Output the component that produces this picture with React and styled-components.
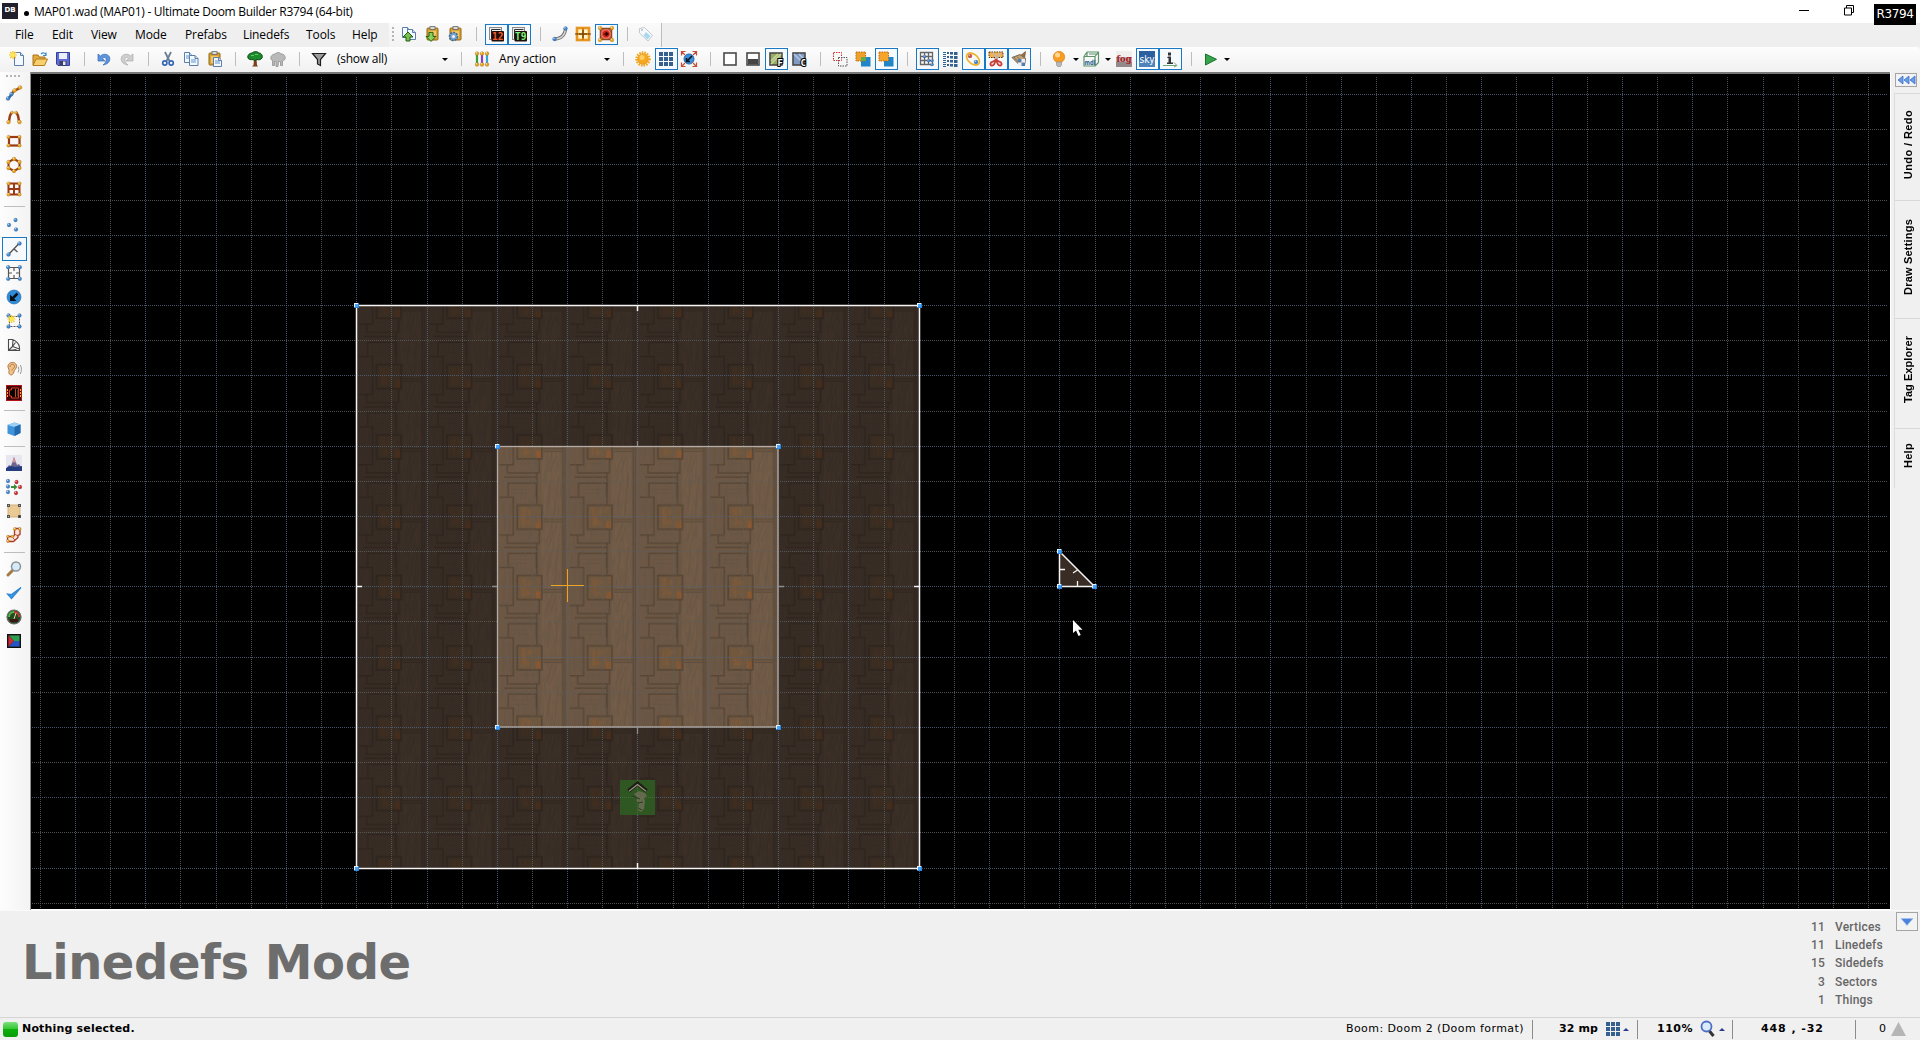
import React from "react";
import styled, { createGlobalStyle } from "styled-components";

const Global = createGlobalStyle`
  html, body { margin: 0; padding: 0; width: 1920px; height: 1040px; overflow: hidden; background: #f0f0f0; }
  * { box-sizing: border-box; }
`;

const UI = `"Open Sans", "Noto Sans", sans-serif`;

const Window = styled.div`
  display: grid;
  grid-template-rows: 23px 24px 25px 838px 107px 23px;
  width: 1920px;
  height: 1040px;
  background: #f0f0f0;
  font-family: ${UI};
  font-size: 12px;
  color: #000;
  position: relative;
`;

const TitleBar = styled.header`
  display: flex;
  align-items: center;
  background: #fff;
  padding-left: 2px;
`;
const Logo = styled.div`
  width: 16px;
  height: 16px;
  margin-bottom: 2px;
  background: #20202c;
  color: #fff;
  font: bold 7px/15px "DejaVu Sans", sans-serif;
  text-align: center;
`;
const Bullet = styled.span`
  width: 5px;
  height: 5px;
  border-radius: 50%;
  background: #000;
  margin: 3px 5px 0 6px;
`;
const Label = styled.span`
  font-size: ${(p) => p.$size || 12}px;
  letter-spacing: ${(p) => p.$ls || 0}px;
  line-height: 16px;
  white-space: pre;
`;
const WindowButtons = styled.div`
  display: flex;
  align-items: center;
  gap: 35px;
  margin-left: auto;
  padding: 0 66px 3px 0;
`;
const Revision = styled.div`
  position: absolute;
  top: 4px;
  left: 1874px;
  width: 42px;
  height: 21px;
  background: #000;
  color: #fff;
  font: 12px/21px "DejaVu Sans", sans-serif;
  letter-spacing: -0.4px;
  text-align: center;
`;

const MenuBar = styled.nav`
  display: flex;
  background: #efefef;
  padding-left: 15px;
`;
const MenuItem = styled.span`
  width: ${(p) => p.$w}px;
  letter-spacing: -0.1px;
  line-height: 23px;
  flex: none;
`;
const Strip = styled.div`
  display: flex;
  align-items: center;
  padding: 0 3px 2px 0;
  background: linear-gradient(#fafafa, #f3f3f3);
  border-right: 1px solid #bdbdbd;
`;
const Grip = styled.i`
  width: 2px;
  height: 14px;
  margin: 0 4px 0 3px;
  background: repeating-linear-gradient(#b4b4b4 0 2px, transparent 2px 4px);
`;
const ToolBar = styled.div`
  display: flex;
  align-items: center;
  padding: 0 0 1px 6px;
  background: linear-gradient(#fdfdfd, #f1f1f1);
  border-radius: 0 4px 0 0;
`;
const Tool = styled.button`
  display: flex;
  align-items: center;
  justify-content: center;
  flex: none;
  width: 23px;
  height: ${(p) => (p.$row ? 21 : 22)}px;
  padding: 0 1px 0 0;
  background: ${(p) => (p.$on ? "#f7fafd" : "transparent")};
  border: 1px solid ${(p) => (p.$on ? "#1a79c4" : "transparent")};
`;
const Sep = styled.i`
  flex: none;
  width: ${(p) => p.$w || 18}px;
  height: 14px;
  background: linear-gradient(#bdbdbd, #bdbdbd) 9px 0 / 1px 14px no-repeat;
`;
const Combo = styled.div`
  display: flex;
  align-items: center;
  justify-content: space-between;
  width: ${(p) => p.$w}px;
  height: 22px;
  padding: 0 4px 0 ${(p) => p.$pad}px;
`;
const Arrow = styled.i`
  flex: none;
  border: 3px solid transparent;
  border-${(p) => (p.$up ? "bottom" : "top")}-color: ${(p) => (p.$up ? "#2c3a8c" : "#000")};
  border-${(p) => (p.$up ? "top" : "bottom")}: 0;
  margin: ${(p) => p.$m || "0"};
`;

const Main = styled.main`
  display: grid;
  grid-template-columns: 31px 1859px 30px;
`;
const SideBar = styled.aside`
  display: flex;
  flex-direction: column;
  padding: 3px 0 0 2px;
  background: linear-gradient(90deg, #fdfdfd, #f3f3f3);
  border-right: 1px solid #8f8f8f;
`;
const SideGrip = styled.i`
  height: 2px;
  width: 14px;
  margin: 0 0 4px 4px;
  background: repeating-linear-gradient(90deg, #b4b4b4 0 2px, transparent 2px 4px);
`;
const SideTool = styled(Tool)`
  width: 25px;
  height: 24px;
`;
const SideSep = styled.i`
  height: ${(p) => p.$h || 12}px;
  margin: 0 5px 0 2px;
  background: linear-gradient(#bdbdbd, #bdbdbd) 0 5px / 100% 1px no-repeat;
`;
const Viewport = styled.section`
  background: #000;
  border-top: 2px solid #777;
  border-bottom: 1px solid #fff;
  svg { display: block; }
`;
const Docker = styled.aside`
  display: flex;
  flex-direction: column;
  align-items: flex-end;
  border-left: 1px solid #fff;
  background: #f0f0f0;
`;
const Collapse = styled.button`
  display: flex;
  align-items: center;
  justify-content: center;
  width: 22px;
  height: ${(p) => p.$h}px;
  padding: 0;
  margin: ${(p) => p.$m};
  background: #f3f3f3;
  border: 1px solid #a5a5a5;
`;
const Tab = styled.div`
  display: flex;
  align-items: center;
  justify-content: center;
  width: 26px;
  height: ${(p) => p.$h}px;
  padding-bottom: ${(p) => p.$p}px;
  border-top: 1px solid #d9d9d9;
  border-left: 1px solid #dcdcdc;
  font: bold 11px/14px "Liberation Sans", sans-serif;
  letter-spacing: ${(p) => p.$ls}px;
  span { writing-mode: vertical-rl; transform: rotate(180deg); white-space: nowrap; }
`;

const InfoPanel = styled.section`
  display: flex;
  justify-content: space-between;
  border-top: 1px solid #fafafa;
  background: #f0f0f0;
`;
const ModeName = styled.h1`
  margin: 23px 0 0 22px;
  font: bold 48px/56px "DejaVu Sans", sans-serif;
  letter-spacing: ${(p) => p.$ls}px;
  color: #6d6d6d;
`;
const InfoRight = styled.div`
  display: flex;
  gap: 11px;
`;
const Stats = styled.div`
  display: grid;
  grid-template-columns: 40px 50px;
  grid-auto-rows: 18.2px;
  column-gap: 10px;
  padding-top: 7px;
  font: 500 12px/18px "Roboto", sans-serif;
  color: #666;
  letter-spacing: 0.2px;
  span:nth-child(odd) { text-align: right; }
`;
const StatusBar = styled.footer`
  display: flex;
  align-items: center;
  border-top: 1px solid #d4d4d4;
  background: #f0f0f0;
  font: 11px/20px "DejaVu Sans", sans-serif;
`;
const Light = styled.i`
  width: 15px;
  height: 15px;
  margin: 0 4px 0 3px;
  border-radius: 3px;
  background: linear-gradient(#7be07b, #35c735 45%, #0caf0c 50%, #0a9c0a);
`;
const Strong = styled.b`
  font-size: 11px;
  letter-spacing: ${(p) => p.$ls || 0}px;
  white-space: pre;
`;
const Cell = styled.div`
  display: flex;
  align-items: center;
  width: ${(p) => p.$w}px;
  height: 19px;
  padding-left: ${(p) => p.$pad || 0}px;
  border-left: ${(p) => (p.$first ? "0" : "1px solid #8c8c8c")};
  margin-left: ${(p) => (p.$first ? "auto" : 0)};
  letter-spacing: ${(p) => p.$ls || 0}px;
  white-space: pre;
`;
const Glyph = styled.svg`
  flex: none;
  margin-left: ${(p) => p.$ml}px;
`;
const IconSvg = styled.svg`
  flex: none;
  overflow: visible;
`;

/* ---------- icons ---------- */

const Ball = ({ x, y, r = 2, c = "#e9a21b" }) => (
  <g>
    <circle cx={x} cy={y} r={r} fill={c} stroke="#00000040" strokeWidth=".5" />
    <circle cx={x - r * 0.3} cy={y - r * 0.4} r={r * 0.4} fill="#ffffffb0" />
  </g>
);
const Corners = ({ c, a = 2, b = 14, r = 2 }) => (
  <>{[[a, a], [b, a], [a, b], [b, b]].map(([x, y]) => <Ball key={`${x}-${y}`} x={x} y={y} r={r} c={c} />)}</>
);
const B = "#3f86cf";
const O = "#eda51f";
const Nine = ({ c = "#355f8f" }) => (
  <g fill={c}>{[0, 1, 2].flatMap((i) => [0, 1, 2].map((j) => <rect key={`${i}${j}`} x={1 + i * 5} y={1 + j * 5} width="4" height="4" />))}</g>
);
const Page = ({ x = 3, y = 1, w = 9, h = 12 }) => (
  <g>
    <path d={`M${x} ${y}h${w - 3}l3 3v${h - 3}h-${w}z`} fill="#f4f9ff" stroke="#5c7ea8" />
    <path d={`M${x + w - 3} ${y}v3h3`} fill="#c9dcf0" stroke="#5c7ea8" />
  </g>
);
const Clip = () => (
  <g>
    <rect x="3" y="2" width="11" height="12" rx="1" fill="#dda431" stroke="#8f6414" />
    <rect x="6" y=".6" width="5" height="3" fill="#d8d8d8" stroke="#666" strokeWidth=".8" />
    <rect x="5" y="5" width="7" height="7" fill="#efc766" />
  </g>
);
const MiniText = (p) => <text fontFamily="DejaVu Sans Mono" fontWeight="bold" fontSize="9" paintOrder="stroke" stroke="#000" strokeWidth="2" {...p} />;
const Frame = ({ children, fill = "#fff" }) => (
  <g>
    <rect x="2" y="2" width="12" height="12" fill={fill} stroke="#4a4a4a" strokeWidth="1.6" />
    {children}
  </g>
);
const Badge = ({ color, children }) => (
  <>
    <rect x="1.500" y="1.500" width="12" height="12" fill="#eee" stroke="#8a8a8a" />
    <path d="M3.500 13v-9.500h9" fill="none" stroke="#333" />
    <rect x="3.500" y="5" width="12.500" height="10.500" rx="1" fill="#1c0f08" />
    <text x="4" y="14" fontFamily="DejaVu Sans Mono" fontWeight="bold" fontSize="10" fill={color} textLength="11.500" lengthAdjust="spacingAndGlyphs">{children}</text>
  </>
);

const ICONS = {
  exportCopy: <><Page x={1.5} y={1.5} w={8} h={10} /><Page x={6.5} y={3.5} w={8} h={10} /><path d="M7 6l5 5h-3v4h-4v-4h-3z" fill="#79c04c" stroke="#235f12" /></>,
  importPaste: <><Clip /><path d="M7 15.4l-5-5h3v-4h4v4h3z" fill="#8fd05a" stroke="#235f12" /></>,
  pasteCog: <><Clip /><circle cx="6.5" cy="10.5" r="4" fill="#79a7d4" stroke="#44688f" strokeDasharray="2 1" strokeWidth="1.6" /><circle cx="6.5" cy="10.5" r="1.5" fill="#eef5fb" /></>,
  tag12: <Badge color="#f65a30">12</Badge>,
  tagT9: <Badge color="#7af57c">T9</Badge>,
  curve: <><path d="M2 13c7 0 11-4 11.500-10" fill="none" stroke="#777" strokeWidth="3.2" /><path d="M2 13c7 0 11-4 11.500-10" fill="none" stroke="#d4d4d4" strokeWidth="1.4" /><Ball x={2.500} y={13} c={B} /><Ball x={13.500} y={2.500} c={B} /></>,
  joined: <><rect x="2" y="2" width="12" height="12" fill="#fff3c8" stroke="#e6951e" strokeWidth="2.6" /><path d="M8 2v12M2 8h12" stroke="#d17d10" strokeWidth="2" /><path d="M8 4v8M4 8h8M0 8h3M13 8h3" stroke="#5a3c10" strokeWidth="1" /></>,
  snapRed: <><rect x="2.500" y="2.500" width="11" height="11" fill="#e05a4a" stroke="#8a4a1c" strokeWidth="1.500" /><circle cx="8" cy="8" r="4.200" fill="#d3241c" stroke="#ffc0aa" strokeWidth=".6" /><path d="M5.500 8h3M8 6l2.500 2-2.500 2z" stroke="#300" fill="#300" /><Corners c={O} a={2} b={14} r={1.900} /></>,
  tag: <><path d="M1.500 2.500l5-1 8 8-4.500 5.500-8.500-8z" fill="#f6fafc" stroke="#c0c9ce" /><path d="M8 6l4.500 4-3 3.500-4-4z" fill="#a8d8ee" /><circle cx="4" cy="4" r="1" fill="#b4c0c6" /></>,
  newFile: <><Page x={5.500} y={1.500} w={9} h={13} /><path d="M4 0v8M0 4h8M1 1l6 6M7 1l-6 6" stroke="#f5c51b" strokeWidth="1.2" /><circle cx="4" cy="4" r="2" fill="#ffe95c" /></>,
  open: <><path d="M1 14v-10h5l1 2h6v3" fill="#e5a93c" stroke="#a9741a" /><path d="M1 14.500l3-6.500h11.500l-3 6.500z" fill="#f7cf6d" stroke="#b27d1d" /><path d="M9 3c2-2 4-1 5 1m0-2.500v3h-3" fill="none" stroke="#3f8bc8" strokeWidth="1.2" /></>,
  save: <><path d="M1.500 1.500h13v13h-11.500l-1.500-1.500z" fill="#5f6bd3" stroke="#343f9c" /><rect x="4" y="2" width="8" height="6" fill="#e9effb" /><rect x="4.500" y="10" width="7" height="4.500" fill="#3d3f63" /><rect x="8" y="10.500" width="2.500" height="3.500" fill="#e7e7ee" /></>,
  undo: <path d="M2 3v7h7l-2.500-2.500c2-2 4.500-.5 3.500 2.500-.5 1.800-1.500 3-3 4 4-.500 7-3 6.800-6.500-.2-4.200-6-5.800-9.300-2.500z" fill="#5f94dc" stroke="#3368b5" strokeWidth=".7" />,
  redo: <path d="M14 3v7h-7l2.500-2.500c-2-2-4.500-.5-3.500 2.500.5 1.800 1.500 3 3 4-4-.500-7-3-6.800-6.500.2-4.200 6-5.800 9.300-2.500z" fill="#cfcfcf" stroke="#a9a9a9" strokeWidth=".7" />,
  cut: <><path d="M5 1l4.500 9M11 1l-4.500 9" stroke="#6d7f95" strokeWidth="1.8" /><circle cx="4.800" cy="12" r="2.100" fill="none" stroke="#3567b4" strokeWidth="1.700" /><circle cx="11.200" cy="12" r="2.100" fill="none" stroke="#3567b4" strokeWidth="1.700" /></>,
  copy: <><Page x={1.500} y={1.500} w={8} h={10} /><Page x={6.500} y={4.500} w={8.500} h={10} /><path d="M3 5h4M3 7h3M8 9h5M8 11h5" stroke="#5c93cf" /></>,
  paste: <><Clip /><Page x={7.500} y={6.500} w={8} h={9} /><path d="M9 10h5M9 12h5" stroke="#5c93cf" /></>,
  tree: <><path d="M7 8h2.500l.5 6 1 1.500h-6l1.500-1.500z" fill="#7a421a" /><path d="M1 7c-1-3 2-5 4-5 2-2 6-1.500 7 0 2.500 0 4 3 3 5-1 2-4 2-5 1.500-2 1.500-3 1-4 0-2 .5-4.500 0-5-1.500z" fill="#1d8a2c" stroke="#0a4a14" /><path d="M4 4.500h3M8 3.500h3" stroke="#5fc868" /></>,
  trees: <path d="M1 8c-1-3 2-5 4-5 2-2 5-2 6 0 3-.5 5 3 4 5-.5 1.500-2 1.500-2.500 1.500v5h-2v-4h-2l-.5 5h-2v-5h-1.500v4h-2v-5c-.500 0-1-.500-1.500-1.500z" fill="#b9b9b9" stroke="#909090" strokeWidth=".8" />,
  funnel: <path d="M1.500 2.500h13l-5 6v6l-3-1.500v-4.500z" fill="#9b9b9b" stroke="#1e1e1e" strokeWidth="1.2" />,
  actions: <><path d="M3 3v11" stroke="#3aa03a" strokeWidth="2.200" /><path d="M8 3v11" stroke="#8c3fc0" strokeWidth="2.200" /><path d="M13 3v11" stroke="#34a5d6" strokeWidth="2.200" />{[3, 8, 13].map((x) => <g key={x}><Ball x={x} y={2.500} r={1.900} /><Ball x={x} y={13.500} r={1.900} /></g>)}</>,
  sun: <><circle cx="8" cy="8" r="6.500" fill="none" stroke="#f0a81e" strokeWidth="2.400" strokeDasharray="1.600 1" /><circle cx="8" cy="8" r="5.300" fill="#f6a821" stroke="#dd8a0f" strokeWidth=".6" /><circle cx="7" cy="6.500" r="2.500" fill="#ffcf63" /></>,
  grid: <Nine />,
  expand: <><path d="M0.500 4.500v-4h4M11.500 .5h4v4M.5 11.500v4h4M15.500 11.500v4h-4M1 1l3 3M15 1l-3 3M1 15l3-3M15 15l-3-3" fill="none" stroke="#c84b35" strokeWidth="1.200" /><circle cx="8" cy="8" r="5" fill="#3a8fd6" stroke="#2a6dac" /><path d="M11 5l-4.500 4.500M5.500 7v3.500h3.500" stroke="#07131f" strokeWidth="1.600" fill="none" /></>,
  box: <Frame />,
  half: <Frame><rect x="3" y="8" width="10" height="5.500" fill="#444" /></Frame>,
  floor: <Frame fill="#94ad62"><path d="M3 10l7-7M3 13l10-10" stroke="#c7d69f" strokeWidth="1.500" /><MiniText x="9.500" y="15" fill="#fff">F</MiniText></Frame>,
  ceil: <Frame fill="#809cc4"><path d="M3 3l7 7M8 3l5 5" stroke="#b3c6e2" strokeWidth="1.500" /><MiniText x="9.500" y="15" fill="#fff">C</MiniText></Frame>,
  mergeA: <><rect x="1.500" y="1.500" width="8" height="8" fill="none" stroke="#d0342c" strokeDasharray="1.500 1" /><rect x="6.500" y="6.500" width="8.500" height="8.500" fill="none" stroke="#55565a" strokeDasharray="1.500 1" /></>,
  mergeB: <><rect x="6" y="6" width="9.500" height="9.500" fill="#1f86c9" /><rect x="1" y="1" width="9.500" height="9" fill="#f0a02a" stroke="#bc6a17" strokeDasharray="1.500 1" /><rect x="6" y="6" width="4.500" height="4" fill="#5fae4e" /></>,
  mergeC: <><rect x="6" y="6" width="9.500" height="9.500" fill="#1f86c9" /><rect x="1" y="1" width="9.500" height="9" fill="#f5a52c" stroke="#bc6a17" strokeDasharray="1.500 1" /></>,
  gridSnap: <><path d="M1.500 1.500h12v12h-12zM5.500 1v13M9.500 1v13M1 5.500h13M1 9.500h13" fill="none" stroke="#676767" strokeWidth="1.300" /><Ball x={5.500} y={5.500} r={1.500} c={B} /><Ball x={9.500} y={9.500} r={1.500} c={B} /><Ball x={13} y={9.500} r={1.600} c={B} /><Ball x={13} y={13.500} r={1.600} c={B} /></>,
  gridDyn: <g fill="#34618f">{[0, 1, 2, 3].map((j) => <React.Fragment key={j}><rect x="12" y={1 + j * 4} width="3.500" height="3" /><rect x="8" y={1 + j * 4} width="3" height="2.500" /><rect x="5" y={1 + j * 4} width="2" height="2" /></React.Fragment>)}{[0, 1, 2, 3, 4, 5, 6, 7].map((j) => <rect key={j} x="1" y={1 + j * 2} width="3" height="1" />)}</g>,
  oval: <><ellipse cx="8" cy="8" rx="7.500" ry="4.700" transform="rotate(40 8 8)" fill="none" stroke="#efb52b" strokeWidth="1.700" /><Ball x={5} y={5} r={2} c="#d5473f" /><Ball x={11} y={11} r={2} c={B} /></>,
  scissors: <><rect x="1" y="1" width="14" height="5.500" fill="#f4b04b" stroke="#553a10" strokeDasharray="1.500 1" /><path d="M5 1l5 9M12 2l-5 8" stroke="#bbb" strokeWidth="1.500" /><path d="M8 9l-5 2.500c-2 3 1.500 4 3 2zM8 9l5 2.500c2 3-1.500 4-3 2z" fill="#f3dcd8" stroke="#c8423a" strokeWidth="1.800" /></>,
  brush: <><path d="M14.500 .5l-5.500 4.500 4.500 3z" fill="#9a6d3a" stroke="#6c4722" strokeWidth=".6" /><path d="M9 3.500l5.500 4-1 7h-4.500l-8-8z" fill="#bda27c" stroke="#77654c" /><path d="M3 6l6 7M6 5.500l5 5" stroke="#857050" /><path d="M7 8h3.500v3.500h-3.500zM10.500 11.500h3.500v3.500h-3.500z" fill="#4b7fb0" /><path d="M10.500 8h3.500v3.500h-3.500zM7 11.500h3.500v3.500h-3.500z" fill="#eef" /></>,
  bulb: <><circle cx="8" cy="6" r="5.700" fill="#f79d23" stroke="#d57a12" strokeWidth=".6" /><circle cx="6.500" cy="4" r="2.500" fill="#ffd690" /><path d="M5.500 11h5v3l-1 1.500h-3l-1-1.500z" fill="#b9b9b9" stroke="#888" strokeWidth=".6" /></>,
  mdl: <><path d="M1 5.500h11v9.500h-11zM4 1h11.500v10.500M4 1l-3 4.500M15.500 1l-3.500 4.500M15.500 11.500l-3.500 3.500M4 1v4M6 3h9" fill="none" stroke="#5f9468" strokeWidth="1.200" /><text x="1.500" y="13.500" fontFamily="DejaVu Sans" fontSize="7" fontWeight="bold" fill="#2b5c94" textLength="11" lengthAdjust="spacingAndGlyphs">mdl</text></>,
  fog: <><rect x="0" y="0" width="16" height="16" fill="#f1eeee" /><rect y="6" width="16" height="10" fill="#b9adaf" /><rect y="11" width="16" height="5" fill="#93888a" /><text x=".5" y="11" fontFamily="DejaVu Serif" fontSize="10" fontWeight="bold" fill="#a71820" textLength="15" lengthAdjust="spacingAndGlyphs">fog</text></>,
  sky: <><rect width="16" height="16" fill="#2b5f9f" /><rect y="9" width="16" height="7" fill="#4f83ba" /><text x=".5" y="11.500" fontFamily="DejaVu Sans" fontSize="10" fill="#fff" textLength="15" lengthAdjust="spacingAndGlyphs">sky</text></>,
  info: <><path d="M6 5.500h3v6h2v1.500h-6v-1.500h1.500v-4.500h-1.500z" fill="#333" /><rect x="6" y="1.500" width="3" height="3" fill="#333" /><path d="M1 14.500h13M12 11.500l3 3-3 1.500" fill="none" stroke="#6fa874" /></>,
  play: <path d="M2.500 3l11 5.300-11 5.700z" fill="#37a34a" stroke="#17732a" />,
  /* side bar */
  line: <><path d="M2 14l4-5" stroke="#2d6fb5" strokeWidth="2.600" /><path d="M6 9c1-4 4-3 8-6.500" stroke="#a8551a" strokeWidth="2.600" fill="none" /><Ball x={2} y={13.500} c={B} /><Ball x={5.500} y={9} c={B} /><Ball x={8.500} y={5.500} /><Ball x={14} y={2.500} /></>,
  arch: <><path d="M3 13c.500-5 1-9 3.500-9.500M13 13c-.500-5-1-9-3.500-9.500" fill="none" stroke="#9c3a14" strokeWidth="2.400" /><Ball x={2.500} y={13} /><Ball x={13.500} y={13} /><Ball x={6} y={3.500} r={1.600} /><Ball x={10} y={3.500} r={1.600} /></>,
  rect: <><rect x="3" y="4" width="10.500" height="8.500" fill="none" stroke="#9c3a14" strokeWidth="2.200" />{[[2.500, 4], [13.500, 4], [2.500, 12.500], [13.500, 12.500]].map(([x, y]) => <Ball key={x + y * 20} x={x} y={y} r={1.800} />)}</>,
  hex: <><path d="M8 2l5.500 3v6l-5.500 3-5.500-3v-6z" fill="none" stroke="#9c3a14" strokeWidth="2" />{[[8, 2], [13.500, 5], [13.500, 11], [8, 14], [2.500, 11], [2.500, 5]].map(([x, y]) => <Ball key={x + y * 20} x={x} y={y} r={1.900} />)}</>,
  lattice: <><path d="M2.500 2.500h11v11h-11zM8 2v12M2 8h12" fill="none" stroke="#9c3a14" strokeWidth="2" /><Corners c={O} a={2.500} b={13.500} r={1.800} /></>,
  vertices: <><Ball x={9.500} y={3} r={1.900} c={B} /><Ball x={3} y={8} r={1.900} c={B} /><Ball x={10} y={12.500} r={1.900} c={B} /></>,
  linedef: <><path d="M3 13l10.500-11M8 8l3.500 3" stroke="#555" strokeWidth="1.400" /><Ball x={2.500} y={13.500} c={B} /><Ball x={13.500} y={2.500} c={B} /></>,
  sector: <><path d="M2.500 2.500h11v11h-11zM8 3v3M8 10v3M3 8h3M10 8h3" fill="none" stroke="#555" strokeWidth="1.200" /><Corners c={B} a={2.200} b={13.800} r={1.900} /></>,
  things: <><circle cx="8" cy="8" r="7" fill="#2f8cd8" stroke="#2067a8" strokeWidth=".6" /><path d="M11.500 4.500l-5 5" stroke="#081018" strokeWidth="2.500" /><path d="M4 5.500v6.500h6.500z" fill="#081018" /></>,
  makeSector: <><path d="M3.500 3.500h10v10h-10z" fill="none" stroke="#555" strokeDasharray="2 1" /><Corners c={B} a={2.500} b={13.500} r={1.900} /><path d="M5.500 2v8M1.500 6h8M2.500 3l6 6M8.500 3l-6 6" stroke="#f2cb1f" strokeWidth="1.200" /><circle cx="5.500" cy="6" r="2.200" fill="#ffe652" /></>,
  wire: <path d="M2.500 13.500v-11h4c4 1.500 7 5 7 8v3zM2.500 13.500l4-4 .500-7M6.500 9.500l3-4M6.500 9.500l7 2.500M2.500 13.500l8-1" fill="none" stroke="#4a4a4a" strokeWidth="1.100" />,
  ear: <><path d="M2 6c-.500-6 9-6 8.500-.5-.2 2.500-2 3-2.700 5.500-.5 3-3.300 4-4.800 1.500-.5-1 .5-3-.2-4.200z" fill="#eec18e" stroke="#b67d42" /><path d="M4 6c0-3.500 4.500-3.500 4.500-.5 0 2-2.500 2-2.500 4" fill="none" stroke="#b67d42" /><path d="M12 5.500c1 2 1 4 0 6M14.300 4c1.500 2.500 1.500 6 0 9" fill="none" stroke="#9a9a9a" /></>,
  scene: <><rect x=".5" y=".5" width="15" height="15" fill="#3a0808" stroke="#b0141a" /><path d="M3.500 5h2v-2h7v10h-7v-2h-2z" fill="#070303" stroke="#e23a1c" /><path d="M9.500 4v8M12 5v6" stroke="#b9481c" /><path d="M1.500 4v8M14.500 4v8" stroke="#e6b52c" strokeDasharray="2 1" /></>,
  cube: <><path d="M1.500 4l7-2.500 6 2v8.500l-6 3-7-2.500z" fill="#3f93d8" /><path d="M1.500 4l7-2.500 6 2-6 2.500z" fill="#9dd0f3" /><path d="M8.500 6l6-2.500v8.500l-6 3z" fill="#2268ae" /></>,
  mountain: <><rect width="16" height="16" fill="#e8e6ee" /><path d="M0 14l3-4 2 1 3-9 3 8 2-1 3 5v2h-16z" fill="#6d6692" /><path d="M8 2l-2 6 2-1 2 1z" fill="#d79a9f" /><path d="M0 13l5-2 4 1 7-1v5h-16z" fill="#233d80" /></>,
  dots: <><Ball x={2} y={2} r={1.900} c={B} /><Ball x={2} y={7.500} r={1.900} c={B} /><Ball x={2} y={13} r={1.900} c={B} /><Ball x={10.500} y={3} r={1.900} c="#cf2b31" /><Ball x={14} y={8} r={1.900} c="#cf2b31" /><Ball x={10} y={14} r={1.900} c="#cf2b31" /><path d="M5 7h3v-2l3.500 3-3.500 3v-2h-3z" fill="#3e8c3a" /></>,
  block: <><rect x="2" y="2" width="12" height="12" fill="#e9c994" stroke="#d3b27c" /><g fill="#aaa" stroke="#555"><rect x="1.500" y="1.500" width="2" height="2" /><rect x="12.500" y="1.500" width="2" height="2" /><rect x="1.500" y="12.500" width="2" height="2" /><rect x="12.500" y="12.500" width="2" height="2" fill="#222" /></g></>,
  stairs: <><path d="M1.500 14.500v-5h5c2 0 2-1 2-3v-5h5.500v6l-2 1v2l-4.500 4z" fill="#f8e4da" stroke="#a83a22" strokeWidth="1.300" /><path d="M6 10l3 3M8.500 7l3.500 2" stroke="#a83a22" strokeWidth=".8" /><Ball x={6.500} y={9.500} r={1.400} /><Ball x={2} y={9.500} r={1.400} /><Ball x={2} y={14} r={1.500} /><Ball x={13.800} y={2} r={1.500} /><Ball x={8.800} y={2} r={1.500} /></>,
  magnifier: <><path d="M6.500 9.500l-4.500 4.500" stroke="#a37b44" strokeWidth="3" strokeLinecap="round" /><circle cx="10" cy="5.500" r="4.500" fill="#d6ebf7" stroke="#8c9299" strokeWidth="1.500" /></>,
  check: <path d="M1.500 9l4 4.500 9.500-11-9.500 7z" fill="#3f9ce4" stroke="#3188d2" strokeWidth="1.200" />,
  globe: <><circle cx="8" cy="8" r="7" fill="#234a23" stroke="#6a6a6a" strokeWidth="1.200" /><path d="M3 8a5 5 0 0 1 5-5" stroke="#4fbb4b" strokeWidth="2" fill="none" /><path d="M8 3a5 5 0 0 1 5 5" stroke="#c93b29" strokeWidth="2" fill="none" /><path d="M8 10l2-6" stroke="#e8d6a0" /><rect x="4" y="10" width="8" height="3" fill="#3b1712" /></>,
  colors: <><rect x="1.500" y="1.500" width="13" height="13" fill="#222" stroke="#111" /><path d="M2.500 2.500l5.500 5.500-5.500 5.500z" fill="#d22736" /><path d="M3 2.500h10.500v5.500h-5.500z" fill="#2aa04e" /><path d="M8 8h5.500v5.500h-10.500z" fill="#2457c5" /></>,
};
const Icon = ({ n }) => <IconSvg width="16" height="16" viewBox="0 0 16 16">{ICONS[n]}</IconSvg>;

const renderTools = (items, row) =>
  items.map((it, i) => {
    if (it === "|") return <Sep key={i} />;
    const on = it[0] === "*";
    return (
      <Tool key={i} $on={on} $row={row}>
        <Icon n={on ? it.slice(1) : it} />
      </Tool>
    );
  });
const renderSide = (items) =>
  items.map((it) => {
    const on = it[0] === "*";
    return (
      <SideTool key={it} $on={on}>
        <Icon n={on ? it.slice(1) : it} />
      </SideTool>
    );
  });

/* ---------- map ---------- */

const STEP = 35.16;
const GX = 356.7;
const GY = 305.54;
const range = (a, b) => Array.from({ length: b - a + 1 }, (_, i) => a + i);
const tone = (k) => (k % 2 ? "#5a5d5d" : "#50637a");

const Vertex = ({ x, y }) => (
  <g shapeRendering="crispEdges">
    <rect x={x - 2.500} y={y - 2.500} width="5" height="5" fill="#2b86dd" />
    <path d={`M${x - 2.500} ${y + 1.500}v-4h4v1h-3v3z`} fill="#e6f2fd" />
    <rect x={x - 1.500} y={y - 1.500} width="3" height="3" fill="#4ba3f5" />
  </g>
);

const TileLines = () => (
  <g fill="none" stroke="#4f3f30" strokeWidth="1.500" strokeOpacity=".75">
    <path d="M65.500 27v71M67.500 27v71" strokeWidth="1" />
    <path d="M2 51h14v38h-14" />
    <path d="M11 50v-13h28v14" />
    <path d="M7 31h32M39.500 27v31" />
    <path d="M10 89v8h32v-14" />
    <path d="M46 73h19M46 75.500h19" strokeWidth="1" />
    <rect x="20" y="59" width="24.500" height="24" fill="#71583f" strokeWidth="1.800" />
    <path d="M24 63l5-2v12l5 4-9 3z" fill="#9a5e2c" stroke="none" opacity=".3" />
    <path d="M31 63l6 2-7 5z" fill="#9a5e2c" stroke="none" opacity=".25" />
    <rect x="38.500" y="75" width="5" height="7" fill="#9d5826" stroke="none" opacity=".65" />
    <path d="M49 96l6-19M53 96l6-17M50 60l3-25M57 70l4-40" strokeWidth=".8" strokeOpacity=".35" />
    <path d="M14 43h20M14 47h18M13 55v30M22 88h14M7 56v28" strokeWidth=".8" strokeOpacity=".25" />
  </g>
);

const MapView = () => (
  <svg width="1859" height="835" viewBox="31 74 1859 835">
    <defs>
      <pattern id="floor" x="497.300" y="446.200" width="70.320" height="70.320" patternUnits="userSpaceOnUse">
        <rect width="71" height="71" fill="#6e5845" />
        <rect x="44" width="20" height="71" fill="#735c48" />
        <TileLines />
        <g transform="translate(0 -70.320)"><TileLines /></g>
      </pattern>
      <filter id="grain" x="0" y="0" width="1" height="1">
        <feTurbulence type="fractalNoise" baseFrequency="0.45 0.07" numOctaves="3" seed="4" />
        <feColorMatrix values="0 0 0 0 0.120  0 0 0 0 0.090  0 0 0 0 0.060  2.200 0 0 0 -0.850" />
      </filter>
    </defs>
    <rect x="356" y="305" width="563" height="563" fill="url(#floor)" />
    <rect x="356" y="305" width="563" height="563" filter="url(#grain)" opacity=".55" />
    <path d="M356 305h563v563h-563zM497 446v281h281v-281z" fill="#070508" fillOpacity=".52" fillRule="evenodd" />
    <path d="M1059.500 551.500v35h35z" fill="#382c25" />

    <g shapeRendering="crispEdges" strokeWidth="1" strokeDasharray="1 1">
      {range(-9, 43).map((k) => {
        const x = Math.floor(GX + STEP * k) + 0.5;
        return <path key={k} d={`M${x} 77V908`} stroke={tone(k)} strokeOpacity=".85" />;
      })}
      {range(-6, 17).map((k) => {
        const y = Math.floor(GY + STEP * k) + 0.5;
        return <path key={k} d={`M32 ${y}H1888`} stroke={tone(k)} strokeOpacity=".85" />;
      })}
    </g>

    <g shapeRendering="crispEdges">
      <rect x="620" y="780" width="35" height="35" fill="#2f5b22" fillOpacity=".92" />
      <path d="M637.500 780v35M620 797.500h35" stroke="#56745a" strokeOpacity=".6" strokeDasharray="1 1" />
    </g>
    <path d="M634 794l5-3 6 2 2 3-3 2 1 3-1 8-3 3-3-2 1-7-3-3 2-2z" fill="#77705c" fillOpacity=".75" />
    <path d="M632 796l8 3M638 803l5-1M638 808l4 2" stroke="#2c3a20" strokeWidth="1" />
    <path d="M628.500 791l9-7.500 9 7.500" fill="none" stroke="#1b1a13" strokeWidth="3.800" />
    <path d="M629 791.300l8.500-6.800 8.500 6.800" fill="none" stroke="#9a9280" strokeWidth="1.300" />

    <g fill="none" stroke="#b3aca6" strokeWidth="1.300">
      <rect x="497.500" y="446.500" width="280.500" height="280.500" />
      <path d="M637.500 441v5M637.500 728v6M492 586.500h5M779 586.500h5" stroke="#8f8a86" />
    </g>
    <g fill="none" stroke="#f6f4f4" strokeWidth="1.500">
      <rect x="356.500" y="305.500" width="563" height="563" />
      <path d="M637.500 306v5M637.500 863v5M357 586.500h5M914 586.500h5" />
      <path d="M1059.500 551.500v35h35z" />
      <path d="M1060 569.500h5M1077.500 586v-5M1077.500 570l-4.500 3" strokeWidth="1.300" />
    </g>
    {[[356.5, 305.5], [919.5, 305.5], [356.5, 868.5], [919.5, 868.5], [497.5, 446.5], [778.5, 446.5], [497.5, 727.5], [778.5, 727.5], [1059.5, 551.5], [1059.5, 586.5], [1094.5, 586.5]].map(([x, y]) => (
      <Vertex key={`${x},${y}`} x={x} y={y} />
    ))}
    <path d="M551 585.500h33M567.500 569v33" stroke="#f2a31c" shapeRendering="crispEdges" />
    <path d="M1073 620v13l3-2.500 2.500 5.500 2.200-1-2.400-5.300h4.200z" fill="#fff" />
  </svg>
);

const MENU = [["File", 37], ["Edit", 39], ["View", 44], ["Mode", 50], ["Prefabs", 58], ["Linedefs", 63], ["Tools", 46], ["Help", 37]];
const STATS = [[11, "Vertices"], [11, "Linedefs"], [15, "Sidedefs"], [3, "Sectors"], [1, "Things"]];

export default function App() {
  return (
    <>
      <Global />
      <Window>
        <TitleBar>
          <Logo>DB</Logo>
          <Bullet />
          <Label $ls={-0.28}>MAP01.wad (MAP01) - Ultimate Doom Builder R3794 (64-bit)</Label>
          <WindowButtons>
            <svg width="10" height="12"><path d="M0 6.500h10" stroke="#000" /></svg>
            <svg width="10" height="11"><path d="M.5 3h7v7h-7zM2.500 3v-2.500h7v7h-2" fill="none" stroke="#000" /></svg>
          </WindowButtons>
        </TitleBar>
        <MenuBar>
          {MENU.map(([t, w]) => <MenuItem key={t} $w={w}>{t}</MenuItem>)}
          <Strip>
            <Grip />
            {renderTools(["exportCopy", "importPaste", "pasteCog", "|", "*tag12", "*tagT9", "|", "curve", "joined", "*snapRed"], true)}
            <Sep $w={17} />
            {renderTools(["tag"], true)}
          </Strip>
        </MenuBar>
        <ToolBar>
          {renderTools(["newFile", "open", "save", "|", "undo", "redo", "|", "cut", "copy", "paste", "|", "tree", "trees", "|", "funnel"])}
          <Combo $w={121} $pad={6}><Label $ls={-0.25}>(show all)</Label><Arrow /></Combo>
          <Sep $w={19} />
          {renderTools(["actions"])}
          <Combo $w={120} $pad={5}><Label $ls={-0.15}>Any action</Label><Arrow /></Combo>
          {renderTools(["|", "sun", "*grid", "expand", "|", "box", "half", "*floor", "ceil", "|", "mergeA", "mergeB", "*mergeC", "|", "*gridSnap", "gridDyn", "*oval", "*scissors", "*brush"])}
          <Sep $w={17} />
          {renderTools(["bulb"])}
          <Arrow $m="0 1px 0 2px" />
          {renderTools(["mdl"])}
          <Arrow $m="0 2px" />
          {renderTools(["fog", "*sky", "*info", "|", "play"])}
          <Arrow $m="0 1px" />
        </ToolBar>
        <Main>
          <SideBar>
            <SideGrip />
            {renderSide(["line", "arch", "rect", "hex", "lattice"])}
            <SideSep />
            {renderSide(["vertices", "*linedef", "sector", "things", "makeSector", "wire", "ear", "scene"])}
            <SideSep />
            {renderSide(["cube"])}
            <SideSep $h={10} />
            {renderSide(["mountain", "dots", "block", "stairs"])}
            <SideSep $h={10} />
            {renderSide(["magnifier", "check", "globe", "colors"])}
          </SideBar>
          <Viewport><MapView /></Viewport>
          <Docker>
            <Collapse $h={14} $m="1px 3px 6px 0">
              <svg width="19" height="10"><path d="M6 1v8l-5-4zM12 1v8l-5-4zM18 1v8l-5-4z" fill="#6b9be6" stroke="#3b6fc8" strokeWidth=".8" /></svg>
            </Collapse>
            <Tab $h={107} $p={5} $ls={0.4}><span>Undo / Redo</span></Tab>
            <Tab $h={118} $p={5} $ls={0.2}><span>Draw Settings</span></Tab>
            <Tab $h={110} $p={7} $ls={0.05}><span>Tag Explorer</span></Tab>
            <Tab $h={60} $p={5} $ls={0.3}><span>Help</span></Tab>
          </Docker>
        </Main>
        <InfoPanel>
          <ModeName $ls={-0.45}>Linedefs Mode</ModeName>
          <InfoRight>
            <Stats>
              {STATS.map(([n, t]) => (
                <React.Fragment key={t}><span>{n}</span><span>{t}</span></React.Fragment>
              ))}
            </Stats>
            <Collapse $h={19} $m="1px 2px 0 0">
              <svg width="14" height="8"><path d="M1 .5h12l-6 7z" fill="#4c82dc" stroke="#a5c2ef" strokeWidth=".8" /></svg>
            </Collapse>
          </InfoRight>
        </InfoPanel>
        <StatusBar>
          <Light />
          <Strong $ls={0.18}>Nothing selected.</Strong>
          <Cell $w={186} $ls={0.42} $first>Boom: Doom 2 (Doom format)</Cell>
          <Cell $w={105} $pad={26}>
            <Strong $ls={0.1}>32 mp</Strong>
            <Glyph $ml={7} width="16" height="16"><Nine /></Glyph>
            <Arrow $up $m="0 0 0 2px" />
          </Cell>
          <Cell $w={95} $pad={19}>
            <Strong $ls={0.5}>110%</Strong>
            <Glyph $ml={7} width="16" height="18"><path d="M9 10.500l4.500 5.500" stroke="#333" strokeWidth="3" /><circle cx="6.500" cy="6.500" r="5" fill="#dcebfb" stroke="#4e70c4" strokeWidth="1.800" /></Glyph>
            <Arrow $up $m="0 0 0 3px" />
          </Cell>
          <Cell $w={123} $pad={28}><Strong $ls={0.9}>448 , -32</Strong></Cell>
          <Cell $w={65} $pad={23}>
            0
            <Glyph $ml={5} width="15" height="14"><path d="M7.500 0l7.500 14h-15z" fill="#b5b5b5" /></Glyph>
          </Cell>
        </StatusBar>
        <Revision>R3794</Revision>
      </Window>
    </>
  );
}
